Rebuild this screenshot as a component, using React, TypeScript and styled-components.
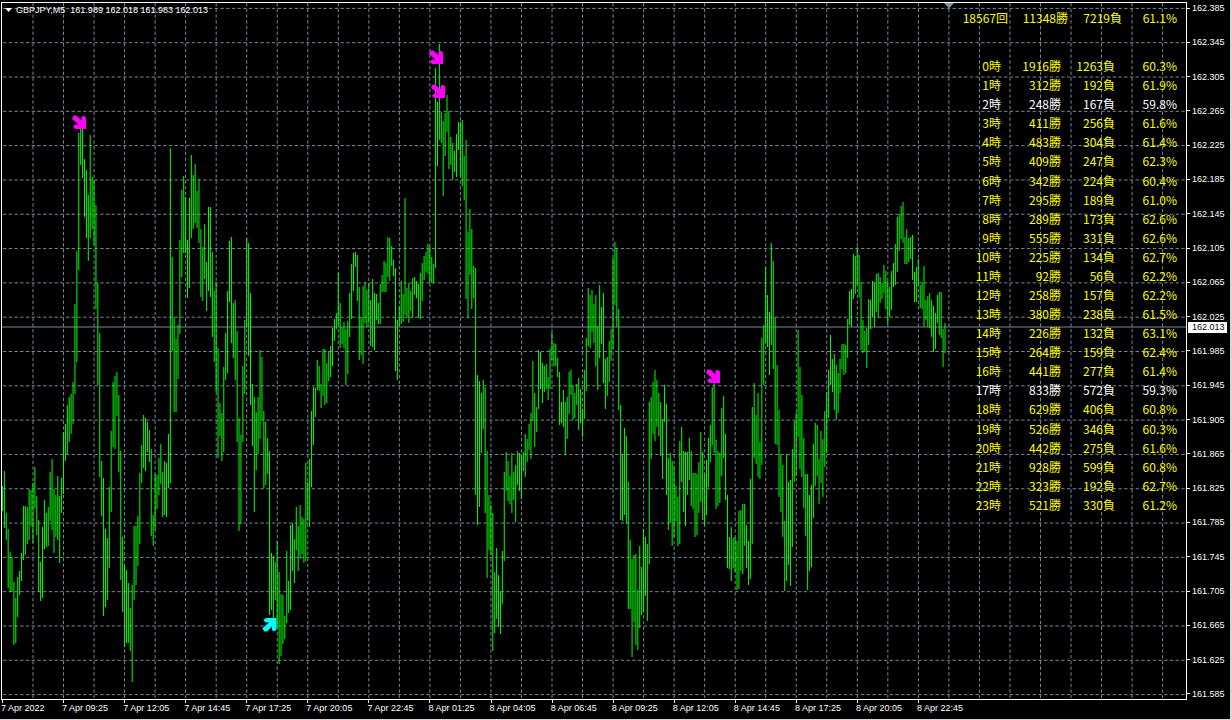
import React from "react";
import styled, { createGlobalStyle } from "styled-components";

const GlobalStyle = createGlobalStyle`
  body {
    margin: 0;
    background: #000;
  }
`;

const labelFont = `"Liberation Sans", Arial, sans-serif`;

/* ---------- data ---------- */

const BAR_STEP = 1.908;
const FIRST_BAR_X = 2.45;

// Each run: index of the first bar, then "high-low" positions on the plot.
const runs: [number, string][] = [
  [0, "486-511 471-528 513-540 529-588 552-592 557-592 582-645 598-643 577-617 571-595 553-581 506-560 506-555 507-544 489-540 490-526 483-543 467-508 496-535 520-592 562-601 527-598 500-549 513-547 507-546 472-521 459-530 489-553 495-537 476-540 496-563 478-513 432-494 424-461 405-454 397-442 394-434 382-424 304-394 251-362"],
  [40, "133-270 120-165 128-178 159-217 170-238 195-261 135-238 177-229 180-245 205-309"],
  [50, "283-385 333-477 461-516 478-616 529-607 538-600 487-568 431-512 382-447 376-449 372-416 395-472 451-580 537-612 566-647 570-643 583-643 608-651 585-682 526-600 526-585 516-566 473-544 445-483 415-468 418-471 422-452 430-462 449-536 515-546 474-530 475-509 458-495 444-484 472-517 461-515 463-517 434-488"],
  [88, "148-483 257-351 317-412 339-412 325-379 240-334 190-277 176-253 197-253 240-298 198-288 155-238 175-229 164-223 191-228 179-243 229-297 247-301 224-279 262-311 207-291 207-297 252-337 291-362 283-392 348-458 403-436 413-461 367-452 333-380 291-373 241-302 237-343 303-358 300-380 331-442 418-531 435-524 366-442 320-394 238-327 243-356 293-405"],
  [131, "384-446 397-512 412-470 397-454 350-439 357-420 411-488 422-485 438-474 451-615 553-610 556-618 562-600 541-628 572-664 594-656 595-644 616-639 551-623 581-613 525-610 523-571 539-583 507-550 526-571 505-559 517-554 519-563 463-561 482-520 459-527"],
  [162, "411-487 387-445 388-417 360-390 366-391 384-408 349-396 349-405 363-403 351-381 346-377 328-366 319-341 313-329 273-325 303-348 327-344 322-348 329-385 321-374 293-337 264-319 253-291 252-267 255-301 287-360 317-355 286-364 282-323 290-327 283-323 300-346 279-347 293-350 294-320 303-324"],
  [198, "284-324 275-292 261-292 263-292 237-277 238-281 246-266 260-276 268-371 320-380 306-326 281-324 294-322 198-315 288-318 283-323 291-311 278-318 277-295 281-298 284-318 273-319 263-301 256-280 252-272 244-274 246-283 257-283 264-283"],
  [227, "68-268 102-166 44-140 112-143 121-196 113-156 95-132 111-169 137-165 143-180 151-172 134-177 122-150 122-176 120-186 156-200 140-299 232-318 209-275 229-309 266-298"],
  [248, "268-495 375-525 381-507 393-453 380-429 387-513 451-578 495-550 505-555 513-651 572-633 548-619 575-627 591-634 551-604 472-561 452-491 461-501 476-504 453-513 472-500 465-522 451-485 453-491 455-499 452-471 434-477 439-462 424-450 413-459 361-421 393-447 407-432 350-409 352-389 363-403 366-392 364-389 377-400 349-389 332-360 343-366 344-366 358-377 372-425 402-423 390-427 402-455 397-439 372-414 370-395 385-420 393-418 384-405 378-430 389-423 409-437 370-419 338-391"],
  [307, "288-346 295-348 290-332 304-343 295-366 326-390 285-358 307-344 293-383 359-409 357-396 341-382 329-361 258-349 242-305 248-327"],
  [323, "309-410 405-520 455-521 428-515 436-524 482-609 540-609 559-657 555-622 554-645 590-650 546-628 567-615 529-612 537-596 544-621 402-564 397-459 382-434 370-441 380-427 393-436 402-456 419-479 385-422 404-495 458-530 453-523 461-546 466-537 486-521 497-546 441-544 427-482 451-512 452-526 452-495 438-480 451-506 473-509 473-537 474-535 462-513 432-502 452-520 474-526 460-515 438-487 425-462 387-445 383-453"],
  [374, "440-509 451-506 453-503 408-476 396-458 434-500 495-568 537-569 527-581 538-568 537-572 541-590 511-589 510-571 504-574 504-546 525-568 541-585 479-579 407-544 383-458 415-464 393-477 442-479 338-465 325-385 267-343 295-347 312-375"],
  [403, "243-345 261-369 317-444 365-445 410-497 454-512 465-537 521-591 454-581 482-565 480-586 449-547 421-482 413-476 330-437 367-469 395-477 438-508 474-536 474-590 495-571 485-567 444-518 423-486 425-476 459-504 431-483 439-497 411-467 392-453 370-418 335-385 359-392 354-410 365-420 373-413 359-393 344-369 344-375 345-373 319-358 291-325 289-327 254-299 256-294 247-285"],
  [449, "255-297 282-350 320-353 331-352 328-368 299-345 300-329 281-317 283-327 274-312 273-318 277-303 283-299 265-293 271-309 281-324 287-317 271-310 263-287 244-285 217-272 214-251 206-239 202-243 237-264 229-264 238-262 237-259 235-280 272-302 267-302 259-285 285-308 282-309 266-327 300-320 296-327 293-328 300-337 306-352 313-349 295-323 292-335 292-338 329-367 323-353"],
];

const barsPath = runs
  .map(([start, text]) =>
    text
      .split(" ")
      .map((pair, i) => {
        const [high, low] = pair.split("-");
        const x = (FIRST_BAR_X + (start + i) * BAR_STEP).toFixed(2);
        return `M${x} ${high}V${low}`;
      })
      .join("")
  )
  .join("");

const gridX = Array.from({ length: 38 }, (_, i) => 33 + i * 30.53);
const gridY = Array.from({ length: 21 }, (_, i) => 8.4 + i * 34.31);

const prices = Array.from({ length: 21 }, (_, i) => (162.385 - i * 0.04).toFixed(3));

const times = [
  "7 Apr 2022", "7 Apr 09:25", "7 Apr 12:05", "7 Apr 14:45",
  "7 Apr 17:25", "7 Apr 20:05", "7 Apr 22:45", "8 Apr 01:25",
  "8 Apr 04:05", "8 Apr 06:45", "8 Apr 09:25", "8 Apr 12:05",
  "8 Apr 14:45", "8 Apr 17:25", "8 Apr 20:05", "8 Apr 22:45",
];

const hours: [number, number, string][] = [
  [1916, 1263, "60.3"], [312, 192, "61.9"], [248, 167, "59.8"], [411, 256, "61.6"],
  [483, 304, "61.4"], [409, 247, "62.3"], [342, 224, "60.4"], [295, 189, "61.0"],
  [289, 173, "62.6"], [555, 331, "62.6"], [225, 134, "62.7"], [92, 56, "62.2"],
  [258, 157, "62.2"], [380, 238, "61.5"], [226, 132, "63.1"], [264, 159, "62.4"],
  [441, 277, "61.4"], [833, 572, "59.3"], [629, 406, "60.8"], [526, 346, "60.3"],
  [442, 275, "61.6"], [928, 599, "60.8"], [323, 192, "62.7"], [521, 330, "61.2"],
];

const ARROW = "M1.5 .5H4.5L9.5 5.5V2L11.5 .5L14 2.5V14H3.5L1 12L3 9.5H6.5L0 4Z";
const sells = [[72, 115], [429, 50], [431, 84], [706, 369]];

/* ---------- parts ---------- */

const Terminal = styled.main`
  box-sizing: border-box;
  min-height: 100vh;
  display: grid;
  grid-template-columns: minmax(0, 1fr) 43px;
  grid-template-rows: minmax(0, 1fr) 19px;
  padding: 2px 0 0 1px;
  border-right: 2px solid #d8d5d0;
  border-bottom: 1px solid #d8d5d0;
  background: #000;
  color: #fff;
  font: 9px/12px ${labelFont};
`;

const Plot = styled.section`
  position: relative;
  border: 1px solid #fff;
  min-height: 560px;
`;

const ChartArt = styled.svg`
  position: absolute;
  inset: 0;
  width: 100%;
  height: 100%;
  display: block;
`;

const Title = styled.h1`
  position: absolute;
  top: 1px;
  left: 3px;
  margin: 0;
  display: flex;
  align-items: center;
  gap: 4px;
  font: inherit;
  white-space: pre;
`;

const Stats = styled.table`
  position: absolute;
  top: 5px;
  right: 9px;
  height: 506px;
  border-collapse: collapse;
  font: 12px/19px "Noto Sans CJK JP", sans-serif;
  text-align: right;
  color: #ff0;
`;

const TotalRow = styled.tr`
  height: 48px;
  vertical-align: top;
`;

const HourRow = styled.tr<{ $weak: boolean }>`
  color: ${(p) => (p.$weak ? "#fff" : "#ff0")};
`;

const Cell = styled.td<{ $width: number; $inset?: boolean }>`
  box-sizing: border-box;
  width: ${(p) => p.$width}px;
  padding: 0 ${(p) => (p.$inset ? 7 : 0)}px 0 0;
  font-weight: 400;
  white-space: nowrap;
`;

const PriceAxis = styled.ol`
  position: relative;
  margin: 0;
  padding: 0;
  list-style: none;
  display: flex;
  flex-direction: column;
  justify-content: space-between;
`;

const Price = styled.li`
  display: flex;
  align-items: center;
  gap: 2px;

  &::before {
    content: "";
    width: 3px;
    height: 1px;
    background: #fff;
  }
`;

const CurrentPrice = styled.li`
  position: absolute;
  left: 1px;
  right: 3px;
  height: 11px;
  line-height: 11px;
  padding-left: 4px;
  background: #fff;
  color: #000;
`;

const TimeAxis = styled.ol`
  margin: 0;
  padding: 0;
  list-style: none;
  display: grid;
  grid-template-columns: repeat(16, minmax(0, 100fr)) 342fr;
  line-height: 10px;
`;

const Time = styled.li`
  white-space: nowrap;

  &::before {
    content: "";
    display: block;
    width: 1px;
    height: 3px;
    margin-left: 1px;
    background: #fff;
  }
`;

export default function App() {
  return (
    <>
      <GlobalStyle />
      <Terminal>
        <Plot>
          <ChartArt viewBox="2 3 1184 696" preserveAspectRatio="none" aria-hidden="true">
            <g stroke="#778899" strokeWidth="1" strokeDasharray="3.4 2.32">
              {gridX.map((x) => (
                <line key={x} x1={x} x2={x} y1="3" y2="698" />
              ))}
              {gridY.map((y) => (
                <line key={y} x1="3" x2="1186" y1={y} y2={y} />
              ))}
            </g>
            <path d="M2 327H1186" stroke="#778899" strokeWidth="1" />
            <path d={barsPath} stroke="#00ff00" strokeWidth="1" fill="none" />
            <path d="M944 3H954L949 8.5Z" fill="#8494a4" />
            {sells.map(([x, y]) => (
              <path key={x} d={ARROW} fill="#ff00ff" transform={`translate(${x} ${y})`} />
            ))}
            <path d={ARROW} fill="#00ffff" transform="translate(262.5 632) scale(1 -1)" />
          </ChartArt>
          <Title>
            <svg width="7" height="4" viewBox="0 0 7 4" aria-hidden="true">
              <path d="M0 0H7L3.5 4Z" fill="#fff" />
            </svg>
            {"GBPJPY,M5  161.989 162.018 161.983 162.013"}
          </Title>
          <Stats>
            <thead>
              <TotalRow>
                <Cell as="th" $width={48}>18567回</Cell>
                <Cell as="th" $width={60}>11348勝</Cell>
                <Cell as="th" $width={54}>7219負</Cell>
                <Cell as="th" $width={55}>61.1%</Cell>
              </TotalRow>
            </thead>
            <tbody>
              {hours.map(([won, lost, rate], hour) => (
                <HourRow key={hour} $weak={Number(rate) < 60}>
                  <Cell $width={48} $inset>{hour}時</Cell>
                  <Cell $width={60} $inset>{won}勝</Cell>
                  <Cell $width={54} $inset>{lost}負</Cell>
                  <Cell $width={55}>{rate}%</Cell>
                </HourRow>
              ))}
            </tbody>
          </Stats>
        </Plot>
        <PriceAxis>
          {prices.map((price) => (
            <Price key={price}>{price}</Price>
          ))}
          <CurrentPrice style={{ top: `${(320 / 698) * 100}%` }}>162.013</CurrentPrice>
        </PriceAxis>
        <TimeAxis>
          {times.map((time) => (
            <Time key={time}>{time}</Time>
          ))}
        </TimeAxis>
      </Terminal>
    </>
  );
}
